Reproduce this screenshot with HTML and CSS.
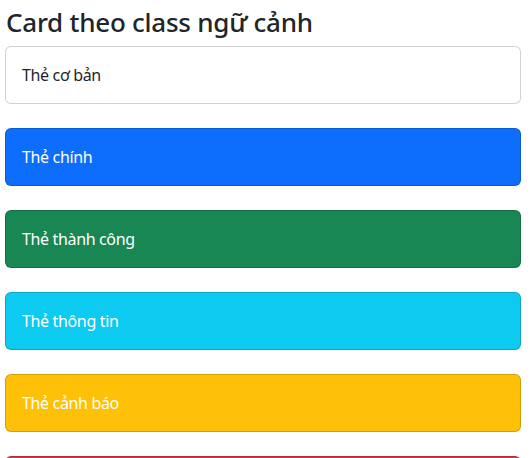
FILE: index.html
```html
<!DOCTYPE html>
<html lang="vi">
<head>
<meta charset="utf-8">
<title>Card theo class ngữ cảnh</title>
<link rel="stylesheet" href="styles.css">
</head>
<body>
<div class="container">
  <h2 class="title">Card theo class ngữ cảnh</h2>
  <div class="card"><div class="card-body">Thẻ cơ bản</div></div>
  <div class="card bg-primary"><div class="card-body">Thẻ chính</div></div>
  <div class="card bg-success"><div class="card-body">Thẻ thành công</div></div>
  <div class="card bg-info"><div class="card-body">Thẻ thông tin</div></div>
  <div class="card bg-warning"><div class="card-body">Thẻ cảnh báo</div></div>
  <div class="card bg-danger"><div class="card-body">Thẻ nguy hiểm</div></div>
</div>
</body>
</html>
```

FILE: styles.css
```css
* { box-sizing: border-box; }
html, body { margin: 0; padding: 0; background: #fff; }
body {
  font-family: "Noto Sans", "Open Sans", sans-serif;
  font-size: 16px;
  line-height: 1.5;
  color: #212529;
  overflow: hidden;
}
.container {
  padding: 7px 9px 0 5px;
  display: flex;
  flex-direction: column;
  gap: 24px;
}
.title {
  margin: 0 0 -16px 1px;
  font-size: 26px;
  font-weight: 500;
  letter-spacing: -0.25px;
  line-height: 1.2;
  color: #212529;
}
.card {
  border: 1px solid rgba(0,0,0,.175);
  border-radius: 6px;
  background: #fff;
}
.card-body {
  padding: 16px;
  letter-spacing: -0.35px;
}
.bg-primary, .bg-success, .bg-info, .bg-warning, .bg-danger { color: #fff; }
.bg-primary { background: #0d6efd; }
.bg-success { background: #198754; }
.bg-info { background: #0dcaf0; }
.bg-warning { background: #ffc107; }
.bg-danger { background: #dc3545; }
```
